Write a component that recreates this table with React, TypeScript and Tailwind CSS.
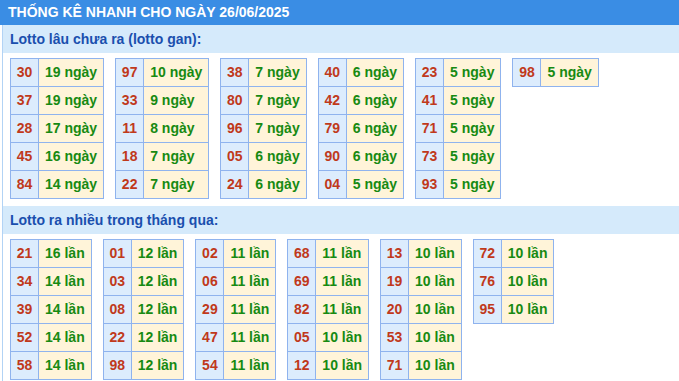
import { Fragment } from "react";

const ganTables: [string, number][][] = [
  [["30", 19], ["37", 19], ["28", 17], ["45", 16], ["84", 14]],
  [["97", 10], ["33", 9], ["11", 8], ["18", 7], ["22", 7]],
  [["38", 7], ["80", 7], ["96", 7], ["05", 6], ["24", 6]],
  [["40", 6], ["42", 6], ["79", 6], ["90", 6], ["04", 5]],
  [["23", 5], ["41", 5], ["71", 5], ["73", 5], ["93", 5]],
  [["98", 5]],
];

const hotTables: [string, number][][] = [
  [["21", 16], ["34", 14], ["39", 14], ["52", 14], ["58", 14]],
  [["01", 12], ["03", 12], ["08", 12], ["22", 12], ["98", 12]],
  [["02", 11], ["06", 11], ["29", 11], ["47", 11], ["54", 11]],
  [["68", 11], ["69", 11], ["82", 11], ["05", 10], ["12", 10]],
  [["13", 10], ["19", 10], ["20", 10], ["53", 10], ["71", 10]],
  [["72", 10], ["76", 10], ["95", 10]],
];

function LottoTable({ rows, unit }: { rows: [string, number][]; unit: string }) {
  return (
    <div className="grid grid-cols-[28px_auto] auto-rows-[28px] border-l border-t border-[#8fb3ee]">
      {rows.map(([num, count]) => (
        <Fragment key={num}>
          <div className="flex items-center justify-center border-r border-b border-[#8fb3ee] bg-[#dcecfd] text-[#c0391b]">
            {num}
          </div>
          <div className="flex items-center px-[6px] border-r border-b border-[#8fb3ee] bg-[#fff4d9] text-[#178a12]">
            {count} {unit}
          </div>
        </Fragment>
      ))}
    </div>
  );
}

function Section({ title, tables, unit }: { title: string; tables: [string, number][][]; unit: string }) {
  return (
    <>
      <div className="h-[28px] flex items-center pl-[7px] bg-[#d5eafb] text-[14px] font-bold text-[#1a4fae]">
        {title}
      </div>
      <div className="flex items-start gap-[11px] pl-[7px] pt-[5px] text-[14px] font-bold">
        {tables.map((rows, i) => (
          <LottoTable key={i} rows={rows} unit={unit} />
        ))}
      </div>
    </>
  );
}

export default function App() {
  return (
    <div className="w-[679px] h-[381px] bg-white overflow-hidden" style={{ fontFamily: '"Liberation Sans", Arial, sans-serif' }}>
      {/* Title */}
      <div className="h-[25px] flex items-center pl-[8px] bg-[#3a8de4] text-white text-[14px] font-bold">
        THỐNG KÊ NHANH CHO NGÀY 26/06/2025
      </div>

      <div className="ml-[2px] border-l border-[#b2d3f5] h-[356px]">
        <Section title="Lotto lâu chưa ra (lotto gan):" tables={ganTables} unit="ngày" />
        <div className="h-[7px]" />
        <Section title="Lotto ra nhiều trong tháng qua:" tables={hotTables} unit="lần" />
      </div>
    </div>
  );
}
